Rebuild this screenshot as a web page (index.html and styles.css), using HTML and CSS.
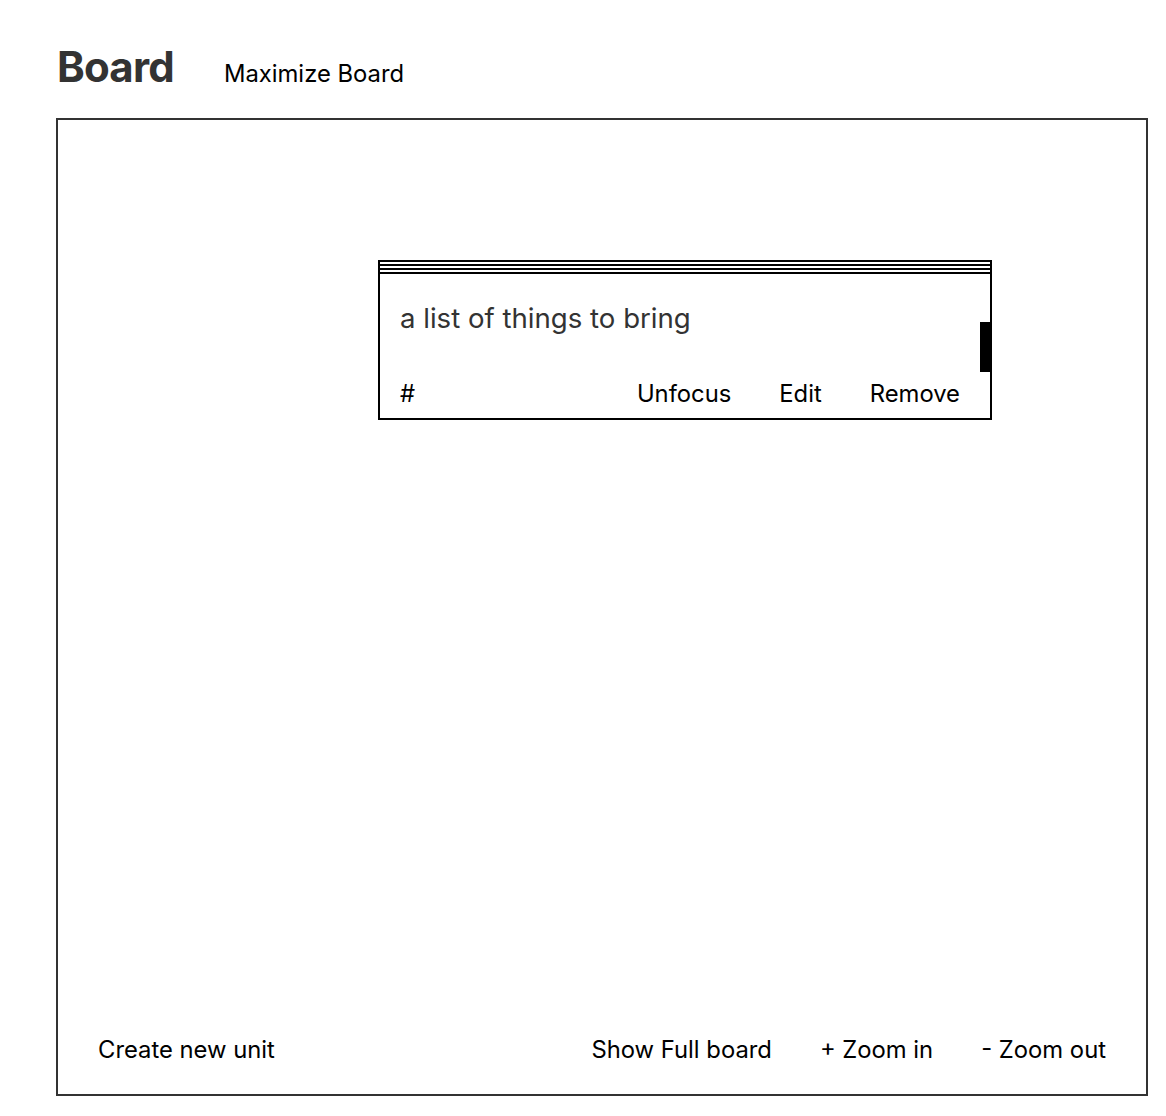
FILE: index.html
```html
<!DOCTYPE html>
<html lang="en">
<head>
    <meta charset="UTF-8">
    <meta name="viewport" content="width=device-width, initial-scale=1.0">
    <title>Board</title>
    <link rel="stylesheet" href="styles.css">
</head>
<body>
    <header class="board-header">
        <h1>Board</h1>
        <a href="#" class="link">Maximize Board</a>
    </header>

    <div class="board">
        <div class="canvas">
            <div class="unit">
                <div class="unit-grip"></div>
                <div class="unit-body">
                    <p class="unit-text">a list of things to bring</p>
                    <div class="unit-actions">
                        <a href="#" class="link">#</a>
                        <span class="spacer"></span>
                        <a href="#" class="link">Unfocus</a>
                        <a href="#" class="link">Edit</a>
                        <a href="#" class="link">Remove</a>
                    </div>
                </div>
                <div class="unit-thumb"></div>
            </div>
        </div>

        <div class="toolbar">
            <a href="#" class="link">Create new unit</a>
            <span class="spacer"></span>
            <a href="#" class="link">Show Full board</a>
            <a href="#" class="link">+ Zoom in</a>
            <a href="#" class="link">- Zoom out</a>
        </div>
    </div>
</body>
</html>
```

FILE: styles.css
```css
body {
    font-family: Inter, "Liberation Sans", Arial, sans-serif;
    background-color: #ffffff;
    color: #000000;
    margin: 0;
    padding: 0;
}

.link {
    color: #000000;
    text-decoration: none;
    font-size: 23.8px;
    line-height: 28px;
}

.spacer {
    flex: 1;
}

.board-header {
    display: flex;
    align-items: baseline;
    gap: 50px;
    padding: 0 0 0 57px;
    height: 118px;
    box-sizing: border-box;
}

.board-header h1 {
    margin: 0;
    padding-top: 43px;
    font-size: 42px;
    line-height: 48px;
    font-weight: bold;
    color: #333333;
    letter-spacing: -0.8px;
}

.board {
    margin-left: 56px;
    width: 1092px;
    height: 978px;
    border: 2px solid #333333;
    box-sizing: border-box;
    display: flex;
    flex-direction: column;
}

.canvas {
    flex: 1;
    position: relative;
    overflow: hidden;
}

.unit {
    position: absolute;
    left: 320px;
    top: 140px;
    width: 614px;
    height: 160px;
    border: 2px solid #000000;
    border-top: none;
    box-sizing: border-box;
    background-color: #ffffff;
}

.unit-grip {
    height: 14px;
    background: repeating-linear-gradient(#000000 0 2px, #ffffff 2px 4px);
}

.unit-body {
    padding: 0 30px 0 20px;
}

.unit-text {
    margin: 0;
    padding-top: 28px;
    font-size: 27.6px;
    color: #333333;
    line-height: 32px;
}

.unit-actions {
    display: flex;
    gap: 48px;
    margin-top: 46px;
}

.unit-thumb {
    position: absolute;
    right: 0;
    top: 62px;
    width: 10px;
    height: 50px;
    background-color: #000000;
}

.toolbar {
    display: flex;
    gap: 48px;
    padding: 0 40px;
    height: 58px;
    align-items: flex-start;
}
```
